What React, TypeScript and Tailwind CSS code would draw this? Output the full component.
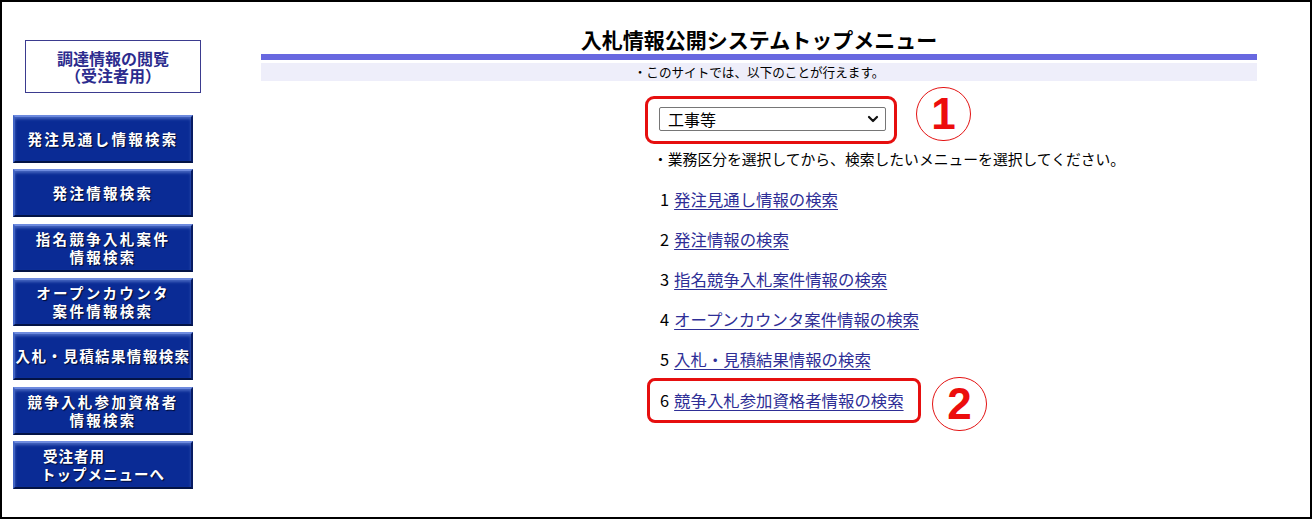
import { ReactNode } from 'react';

const jp = { fontFamily: '"Noto Sans CJK JP", "Noto Sans", sans-serif' };

function SideButton({ children, variant = 'normal' }: { children: ReactNode; variant?: 'normal' | 'left' | 'tight' }) {
  const textCls =
    variant === 'left' ? 'text-left tracking-[1px]' : variant === 'tight' ? 'text-center tracking-[1.4px]' : 'text-center tracking-[2.3px]';
  return (
    <a
      href="#"
      className="flex h-[48px] w-[180px] items-center justify-center overflow-visible border-[2px] border-t-[#6d8ade] border-l-[#4063c4] border-b-[#031345] border-r-[#081c63] bg-[#0a2b95] shadow-[inset_0_2px_3px_rgba(140,170,240,0.45)]"
    >
      <span className={`whitespace-nowrap text-[14.5px] font-bold leading-[18px] text-white [text-shadow:1px_1px_1px_#000a30] ${textCls}`}>
        {children}
      </span>
    </a>
  );
}

function Circled({ n }: { n: string }) {
  return (
    <div className="flex h-[54px] w-[55px] items-center justify-center rounded-full border-[1.5px] border-[#e31313]">
      <span className="text-[44px] font-bold leading-none text-[#ec0d0d]" style={{ fontFamily: '"Liberation Sans", Arial, sans-serif' }}>
        {n}
      </span>
    </div>
  );
}

const links = [
  '発注見通し情報の検索',
  '発注情報の検索',
  '指名競争入札案件情報の検索',
  'オープンカウンタ案件情報の検索',
  '入札・見積結果情報の検索',
];

export default function App() {
  return (
    <div className="h-[519px] w-[1312px] border-2 border-black bg-white" style={jp}>
      <div className="flex">
        {/* sidebar */}
        <div className="w-[259px] shrink-0">
          <div className="ml-[23px] mt-[38px] flex h-[53px] w-[176px] flex-col items-center justify-center border border-[#3b3b8f] text-[16px] font-bold leading-[17px] text-[#2c2c8e]">
            <span>調達情報の閲覧</span>
            <span>（受注者用）</span>
          </div>
          <div className="ml-[11px] mt-[22px] flex flex-col gap-[6.33px]">
            <SideButton>発注見通し情報検索</SideButton>
            <SideButton>発注情報検索</SideButton>
            <SideButton>
              指名競争入札案件
              <br />
              情報検索
            </SideButton>
            <SideButton>
              オープンカウンタ
              <br />
              案件情報検索
            </SideButton>
            <SideButton variant="tight">入札・見積結果情報検索</SideButton>
            <SideButton>
              競争入札参加資格者
              <br />
              情報検索
            </SideButton>
            <SideButton variant="left">
              <span className="pl-[2px]">受注者用</span>
              <br />
              トップメニューへ
            </SideButton>
          </div>
        </div>

        {/* main */}
        <div className="w-[996px] shrink-0">
          <h1 className="mt-[23px] h-[28px] text-center text-[21px] font-bold leading-[28px] text-black">
            入札情報公開システムトップメニュー
          </h1>
          <div className="mt-[1px] h-[6px] bg-[#6868e0]" />
          <div className="mt-[3px] h-[18px] bg-[#eeeefa] text-center text-[12.6px] leading-[18px] text-black">
            ・このサイトでは、以下のことが行えます。
          </div>

          <div className="pl-[384px]">
            <div className="mt-[15px] flex items-start">
              <div className="h-[48px] w-[252px] rounded-[9px] border-[3px] border-[#e60f0f] pl-[11px] pt-[8px]">
                <div className="flex h-[24px] w-[227px] items-center justify-between rounded-[2px] border border-[#767676] bg-white pl-[8px] pr-[6px] text-[16px] text-black">
                  <span>工事等</span>
                  <svg width="12" height="12" viewBox="0 0 12 12" fill="none">
                    <path d="M2 4l4 4 4-4" stroke="#111" strokeWidth="2.2" strokeLinecap="round" strokeLinejoin="round" />
                  </svg>
                </div>
              </div>
              <div className="-mt-[9px] ml-[19px]">
                <Circled n="1" />
              </div>
            </div>

            <p className="ml-[8px] mt-[6px] text-[14.8px] leading-[18px] text-black">
              ・業務区分を選択してから、検索したいメニューを選択してください。
            </p>

            <ul className="mt-[11px]">
              {links.map((t, i) => (
                <li key={t} className="flex h-[40px] items-center pl-[15px] text-[16.4px] text-black">
                  <span className="mr-[5px]">{i + 1}</span>
                  <a href="#" className="text-[#2e2e96] underline underline-offset-[3px]">
                    {t}
                  </a>
                </li>
              ))}
            </ul>

            <div className="-mt-[1px] ml-[2px] flex items-start">
              <div className="flex h-[45px] w-[274px] items-center rounded-[8px] border-[3px] border-[#e60f0f] pl-[10px] text-[16.4px] text-black">
                <span className="mr-[5px]">6</span>
                <a href="#" className="text-[#2e2e96] underline underline-offset-[3px]">
                  競争入札参加資格者情報の検索
                </a>
              </div>
              <div className="-mt-[1px] ml-[11px]">
                <Circled n="2" />
              </div>
            </div>
          </div>
        </div>
      </div>
    </div>
  );
}
